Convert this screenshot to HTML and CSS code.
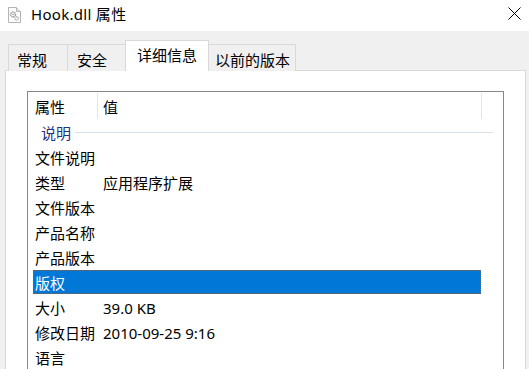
FILE: index.html
```html
<!DOCTYPE html>
<html lang="zh-CN">
<head>
<meta charset="utf-8">
<title>Hook.dll 属性</title>
<link rel="stylesheet" href="styles.css">
</head>
<body>
<div class="window">
  <div class="titlebar">
    <svg class="file-icon" width="13" height="16" viewBox="0 0 13 16">
      <path d="M0.5 0.5 H8.5 L12.5 4.5 V15.5 H0.5 Z" fill="#fcfcfc" stroke="#b4b4b4"/>
      <path d="M8.5 0.5 V4.5 H12.5" fill="#e8e8e8" stroke="#b4b4b4"/>
      <circle cx="5" cy="7.5" r="2.4" fill="none" stroke="#9a9a9a" stroke-width="1.6" stroke-dasharray="1.2 0.7"/>
      <circle cx="5" cy="7.5" r="0.8" fill="#9a9a9a"/>
      <circle cx="8.6" cy="11.3" r="1.7" fill="none" stroke="#a8a8a8" stroke-width="1.3" stroke-dasharray="1 0.6"/>
    </svg>
    <span class="title">Hook.dll 属性</span>
    <svg class="close" width="13" height="13" viewBox="0 0 13 13">
      <path d="M0.5 0.5 L12.5 12.5 M12.5 0.5 L0.5 12.5" stroke="#000" stroke-width="1" fill="none"/>
    </svg>
  </div>
  <div class="client">
    <div class="tabs">
      <div class="tab tab-1">常规</div>
      <div class="tab tab-2">安全</div>
      <div class="tab tab-active">详细信息</div>
      <div class="tab tab-4">以前的版本</div>
    </div>
    <div class="panel">
      <div class="listview">
        <div class="lv-header">
          <div class="col-h col-name">属性</div>
          <div class="col-h col-value">值</div>
          <div class="col-h col-rest"></div>
        </div>
        <div class="group"><span class="group-title">说明</span><span class="group-line"></span></div>
        <div class="row"><span class="k">文件说明</span><span class="v"></span></div>
        <div class="row"><span class="k">类型</span><span class="v">应用程序扩展</span></div>
        <div class="row"><span class="k">文件版本</span><span class="v"></span></div>
        <div class="row"><span class="k">产品名称</span><span class="v"></span></div>
        <div class="row"><span class="k">产品版本</span><span class="v"></span></div>
        <div class="row selected"><span class="k">版权</span><span class="v"></span></div>
        <div class="row"><span class="k">大小</span><span class="v">39.0 KB</span></div>
        <div class="row"><span class="k">修改日期</span><span class="v">2010-09-25 9:16</span></div>
        <div class="row"><span class="k">语言</span><span class="v"></span></div>
      </div>
    </div>
  </div>
</div>
</body>
</html>
```

FILE: styles.css
```css
html, body {
  margin: 0;
  padding: 0;
}
body {
  width: 529px;
  height: 369px;
  overflow: hidden;
  background: #f0f0f0;
  font-family: "Noto Sans", "Noto Sans CJK SC", sans-serif;
  font-size: 15px;
  color: #000;
}
.window {
  width: 529px;
  height: 369px;
  display: flex;
  flex-direction: column;
}
.titlebar {
  height: 31px;
  flex: none;
  background: #fff;
  display: flex;
  align-items: center;
  padding-left: 8px;
}
.file-icon {
  flex: none;
  margin-right: 10px;
  margin-top: -2px;
}
.title {
  font-size: 15px;
  line-height: 20px;
  margin-top: -4px;
  letter-spacing: 0.3px;
}
.close {
  margin-left: auto;
  margin-right: 8px;
  margin-top: -4px;
}
.client {
  flex: 1;
  background: #f0f0f0;
  padding: 10px 3px 0 5px;
  display: flex;
  flex-direction: column;
  min-height: 0;
}
.tabs {
  display: flex;
  align-items: flex-end;
  height: 30px;
  padding-left: 3px;
  position: relative;
  z-index: 1;
  margin-bottom: -1px;
}
.tab {
  box-sizing: border-box;
  height: 27px;
  border-top: 1px solid #d9d9d9;
  background: #f0f0f0;
  line-height: 20px;
  padding-top: 5px;
  white-space: nowrap;
}
.tab-1 {
  width: 59px;
  border-left: 1px solid #d9d9d9;
  padding-left: 8px;
}
.tab-2 {
  width: 58px;
  border-left: 1px solid #d9d9d9;
  padding-left: 9px;
}
.tab-active {
  width: 84px;
  height: 31px;
  border-left: 1px solid #d9d9d9;
  border-right: 1px solid #d9d9d9;
  background: #fff;
  text-align: center;
  padding-top: 4px;
}
.tab-4 {
  width: 87px;
  border-right: 1px solid #d9d9d9;
  padding-left: 6px;
}
.panel {
  flex: 1;
  background: #fff;
  border: 1px solid #d9d9d9;
  border-bottom: none;
  padding: 20px 21px 0 21px;
  min-height: 0;
}
.listview {
  border: 1px solid #828790;
  border-bottom: none;
  height: 100%;
  box-sizing: border-box;
}
.lv-header {
  display: flex;
  height: 28px;
}
.col-h {
  box-sizing: border-box;
  height: 26px;
  margin-top: 1px;
  line-height: 26px;
  padding-top: 1px;
}
.col-name {
  width: 70px;
  padding-left: 7px;
  border-right: 1px solid #e5e5e5;
}
.col-value {
  width: 384px;
  padding-left: 5px;
  border-right: 1px solid #e5e5e5;
}
.col-rest {
  flex: 1;
}
.group {
  height: 24px;
  display: flex;
  align-items: center;
  padding-left: 13px;
  padding-right: 10px;
}
.group-title {
  color: #1a3580;
  line-height: 20px;
  padding-top: 1px;
}
.group-line {
  flex: 1;
  height: 1px;
  background: #d9e1ea;
  margin-left: 4px;
}
.row {
  display: flex;
  box-sizing: border-box;
  height: 24px;
  margin-top: 1px;
  margin-left: 5px;
  width: 448px;
  padding-top: 1px;
  line-height: 24px;
  white-space: nowrap;
  overflow: hidden;
}
.k {
  width: 70px;
  box-sizing: border-box;
  padding-left: 2px;
  flex: none;
}
.v {
  flex: 1;
}
.selected {
  background: #0078d7;
  color: #fff;
  outline: 1px dotted #5a6b7d;
  outline-offset: -1px;
}
```
